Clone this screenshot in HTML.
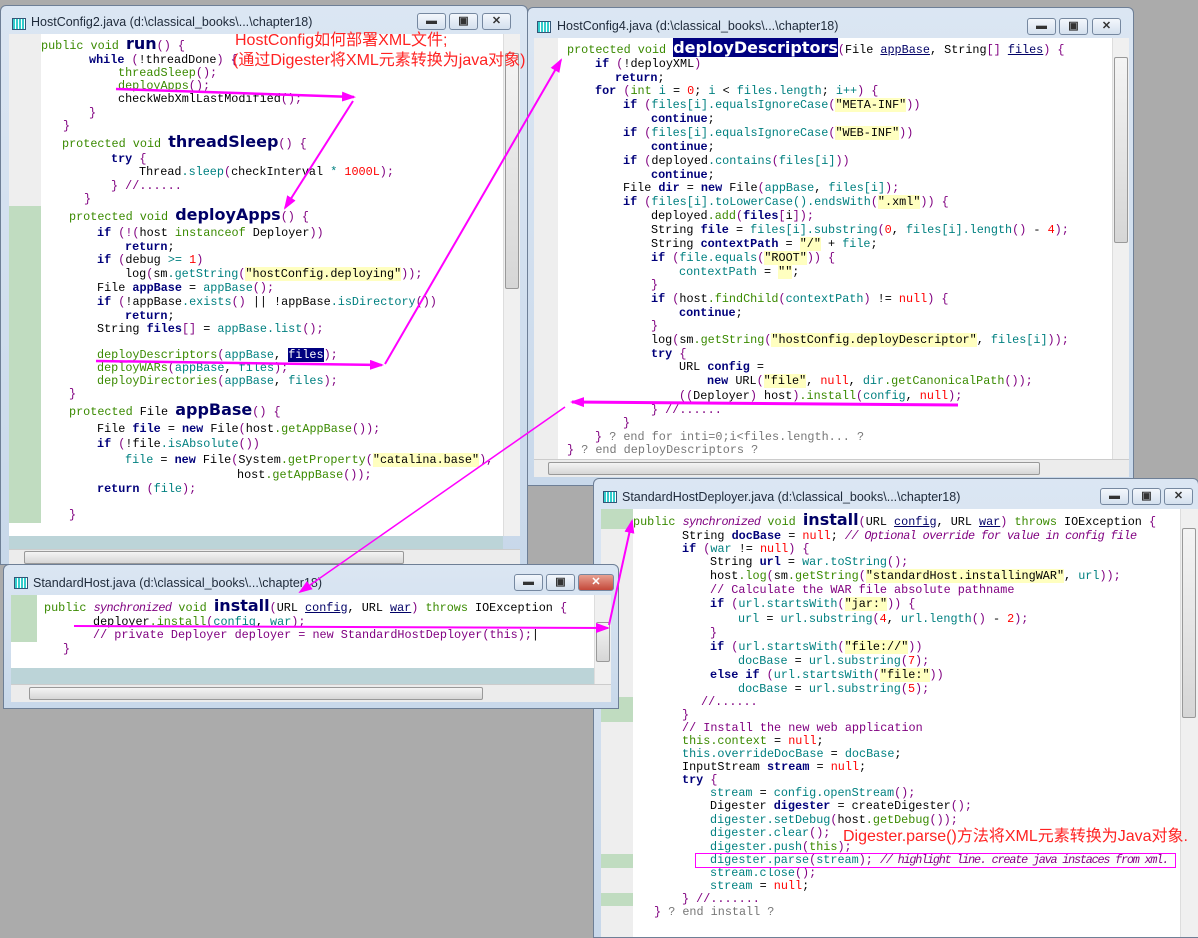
<!DOCTYPE html>
<html><head><meta charset="utf-8"><style>
*{margin:0;padding:0;box-sizing:border-box}
body{width:1198px;height:937px;background:#ababab;position:relative;overflow:hidden;font-family:"Liberation Mono",monospace;font-size:11.8px}
.w{position:absolute;overflow:hidden;background:linear-gradient(#dbe6f3,#c8d8ea);border:1px solid #6e7f96;border-radius:6px 6px 0 0}
.o{position:absolute}
.t{position:absolute;font-family:"Liberation Sans",sans-serif;font-size:12.5px;color:#1e2a3a;white-space:nowrap}
.ic{position:absolute;width:14px;height:12px;border:1px solid #357;background:repeating-linear-gradient(90deg,#3cc 0 2px,#fff 2px 3px)}
.bt{position:absolute;width:29px;height:17px;border:1px solid #7688a0;border-radius:3px;background:linear-gradient(#f3f7fc,#d4e0ee);font:bold 11px "Liberation Sans",sans-serif;color:#333;text-align:center;line-height:15px}
.bt.x{background:linear-gradient(#e8a191,#c4483a);color:#fff;width:44px}
.wh{position:absolute;background:#fff}
.gu{position:absolute;background:#eeeeee}
.gr{position:absolute;background:#c0dcc0}
.vs{position:absolute;background:#f0f0f0;border-left:1px solid #ddd}
.hs{position:absolute;background:#ececec;border-top:1px solid #ccc}
.th{position:absolute;background:linear-gradient(#f4f4f4,#d6d6d6);border:1px solid #999;border-radius:2px}
.bl{position:absolute;background:#bcd4d8}
.l{position:absolute;white-space:pre;line-height:14px;height:14px;color:#000}
.k{color:#00007a;font-weight:bold}
.g{color:#3a8a00}
.m{color:#008080}
.s{background:#ffffc0}
.n{color:#f00}
.c{color:#800080}
.p{color:#800080}
.i{font-style:italic;color:#800080;letter-spacing:-0.6px}
.b{font-family:"DejaVu Sans",sans-serif;font-weight:bold;font-size:16px;color:#000066}
.sel{background:#000080;color:#fff}
.u{text-decoration:underline;color:#000066}
.gy{color:#777}
.red{position:absolute;color:#f22;font-family:"Liberation Sans","Noto Sans CJK SC",sans-serif;font-size:16px;white-space:nowrap;line-height:19px}
</style></head><body>

<!-- Window 1 -->
<div class="w" style="left:0;top:5px;width:528px;height:560px">
<div class="o" style="left:0;top:-5px">
<div class="ic" style="left:11px;top:17px"></div>
<div class="t" style="left:30px;top:14px">HostConfig2.java (d:\classical_books\...\chapter18)</div>
<div class="bt" style="left:416px;top:12px">▬</div><div class="bt" style="left:448px;top:12px">▣</div><div class="bt" style="left:481px;top:12px">✕</div>
<div class="wh" style="left:8px;top:33px;width:498px;height:502px"></div>
<div class="gu" style="left:8px;top:33px;width:32px;height:172px"></div>
<div class="gr" style="left:8px;top:205px;width:32px;height:317px"></div>
<div class="vs" style="left:502px;top:33px;width:17px;height:502px"></div>
<div class="th" style="left:504px;top:52px;width:14px;height:236px"></div>
<div class="bl" style="left:8px;top:535px;width:494px;height:13px"></div>
<div class="hs" style="left:8px;top:548px;width:511px;height:16px"></div>
<div class="th" style="left:23px;top:550px;width:380px;height:13px"></div>

<div class="l" style="left:40px;top:36px"><span class="g">public void </span><span class="b">run</span><span class="p">() {</span></div>
<div class="l" style="left:88px;top:52px"><span class="k">while</span> <span class="p">(</span>!threadDone<span class="p">)</span> <span class="p">{</span></div>
<div class="l" style="left:117px;top:65px"><span class="g">threadSleep</span><span class="p">();</span></div>
<div class="l" style="left:117px;top:78px"><span class="g">deployApps</span><span class="p">();</span></div>
<div class="l" style="left:117px;top:91px">checkWebXmlLastModified<span class="p">();</span></div>
<div class="l" style="left:88px;top:105px"><span class="p">}</span></div>
<div class="l" style="left:62px;top:118px"><span class="p">}</span></div>
<div class="l" style="left:61px;top:134px"><span class="g">protected void </span><span class="b">threadSleep</span><span class="p">() {</span></div>
<div class="l" style="left:110px;top:151px"><span class="k">try</span> <span class="p">{</span></div>
<div class="l" style="left:138px;top:164px">Thread<span class="m">.sleep</span><span class="p">(</span>checkInterval <span class="m">*</span> <span class="n">1000L</span><span class="p">);</span></div>
<div class="l" style="left:110px;top:178px"><span class="p">} //......</span></div>
<div class="l" style="left:83px;top:191px"><span class="p">}</span></div>
<div class="l" style="left:68px;top:207px"><span class="g">protected void </span><span class="b">deployApps</span><span class="p">() {</span></div>
<div class="l" style="left:96px;top:225px"><span class="k">if</span> <span class="p">(!(</span>host <span class="g">instanceof</span> Deployer<span class="p">))</span></div>
<div class="l" style="left:124px;top:239px"><span class="k">return</span>;</div>
<div class="l" style="left:96px;top:252px"><span class="k">if</span> <span class="p">(</span>debug <span class="m">&gt;=</span> <span class="n">1</span><span class="p">)</span></div>
<div class="l" style="left:124px;top:266px">log<span class="p">(</span>sm<span class="m">.getString</span><span class="p">(</span><span class="s">"hostConfig.deploying"</span><span class="p">));</span></div>
<div class="l" style="left:96px;top:280px">File <span class="k">appBase</span> = <span class="m">appBase</span><span class="p">();</span></div>
<div class="l" style="left:96px;top:294px"><span class="k">if</span> <span class="p">(</span>!appBase<span class="m">.exists</span><span class="p">()</span> || !appBase<span class="m">.isDirectory</span><span class="p">())</span></div>
<div class="l" style="left:124px;top:308px"><span class="k">return</span>;</div>
<div class="l" style="left:96px;top:321px">String <span class="k">files</span><span class="p">[]</span> = <span class="m">appBase.list</span><span class="p">();</span></div>
<div class="l" style="left:96px;top:347px"><span class="g">deployDescriptors</span><span class="p">(</span><span class="m">appBase</span>, <span class="sel">files</span><span class="p">);</span></div>
<div class="l" style="left:96px;top:360px"><span class="g">deployWARs</span><span class="p">(</span><span class="m">appBase</span>, <span class="m">files</span><span class="p">);</span></div>
<div class="l" style="left:96px;top:373px"><span class="g">deployDirectories</span><span class="p">(</span><span class="m">appBase</span>, <span class="m">files</span><span class="p">);</span></div>
<div class="l" style="left:68px;top:386px"><span class="p">}</span></div>
<div class="l" style="left:68px;top:402px"><span class="g">protected </span>File <span class="b">appBase</span><span class="p">() {</span></div>
<div class="l" style="left:96px;top:421px">File <span class="k">file</span> = <span class="k">new</span> File<span class="p">(</span>host<span class="g">.getAppBase</span><span class="p">());</span></div>
<div class="l" style="left:96px;top:436px"><span class="k">if</span> <span class="p">(</span>!file<span class="m">.isAbsolute</span><span class="p">())</span></div>
<div class="l" style="left:124px;top:452px"><span class="m">file</span> = <span class="k">new</span> File<span class="p">(</span>System<span class="g">.getProperty</span><span class="p">(</span><span class="s">"catalina.base"</span><span class="p">),</span></div>
<div class="l" style="left:236px;top:467px">host<span class="g">.getAppBase</span><span class="p">());</span></div>
<div class="l" style="left:96px;top:481px"><span class="k">return</span> <span class="p">(</span><span class="m">file</span><span class="p">);</span></div>
<div class="l" style="left:68px;top:507px"><span class="p">}</span></div>
<div class="red" style="left:234px;top:30px">HostConfig如何部署XML文件;</div>
<div class="red" style="left:232px;top:50px">(通过Digester将XML元素转换为java对象)</div>
</div></div>

<!-- Window 2 -->
<div class="w" style="left:527px;top:7px;width:607px;height:479px">
<div class="o" style="left:-527px;top:-7px">
<div class="ic" style="left:536px;top:20px"></div>
<div class="t" style="left:556px;top:18px">HostConfig4.java (d:\classical_books\...\chapter18)</div>
<div class="bt" style="left:1026px;top:17px">▬</div><div class="bt" style="left:1058px;top:17px">▣</div><div class="bt" style="left:1091px;top:17px">✕</div>
<div class="wh" style="left:533px;top:37px;width:582px;height:421px"></div>
<div class="gu" style="left:533px;top:37px;width:24px;height:421px"></div>
<div class="vs" style="left:1111px;top:37px;width:17px;height:421px"></div>
<div class="th" style="left:1113px;top:56px;width:14px;height:186px"></div>
<div class="hs" style="left:533px;top:458px;width:595px;height:18px"></div>
<div class="th" style="left:547px;top:461px;width:492px;height:13px"></div>

<div class="l" style="left:566px;top:40px"><span class="g">protected void </span><span class="b sel" style="color:#fff">deployDescriptors</span><span class="p">(</span>File <span class="u">appBase</span>, String<span class="p">[]</span> <span class="u">files</span><span class="p">) {</span></div>
<div class="l" style="left:594px;top:56px"><span class="k">if</span> <span class="p">(</span>!deployXML<span class="p">)</span></div>
<div class="l" style="left:614px;top:70px"><span class="k">return</span>;</div>
<div class="l" style="left:594px;top:83px"><span class="k">for</span> <span class="p">(</span><span class="g">int</span> <span class="m">i</span> = <span class="n">0</span>; <span class="m">i</span> &lt; <span class="m">files.length</span>; <span class="m">i++</span><span class="p">) {</span></div>
<div class="l" style="left:622px;top:97px"><span class="k">if</span> <span class="p">(</span><span class="m">files[i].equalsIgnoreCase</span><span class="p">(</span><span class="s">"META-INF"</span><span class="p">))</span></div>
<div class="l" style="left:650px;top:111px"><span class="k">continue</span>;</div>
<div class="l" style="left:622px;top:125px"><span class="k">if</span> <span class="p">(</span><span class="m">files[i].equalsIgnoreCase</span><span class="p">(</span><span class="s">"WEB-INF"</span><span class="p">))</span></div>
<div class="l" style="left:650px;top:139px"><span class="k">continue</span>;</div>
<div class="l" style="left:622px;top:153px"><span class="k">if</span> <span class="p">(</span>deployed<span class="m">.contains</span><span class="p">(</span><span class="m">files[i]</span><span class="p">))</span></div>
<div class="l" style="left:650px;top:167px"><span class="k">continue</span>;</div>
<div class="l" style="left:622px;top:180px">File <span class="k">dir</span> = <span class="k">new</span> File<span class="p">(</span><span class="m">appBase</span>, <span class="m">files[i]</span><span class="p">);</span></div>
<div class="l" style="left:622px;top:194px"><span class="k">if</span> <span class="p">(</span><span class="m">files[i].toLowerCase().endsWith</span><span class="p">(</span><span class="s">".xml"</span><span class="p">)) {</span></div>
<div class="l" style="left:650px;top:208px">deployed<span class="g">.add</span><span class="p">(</span><span class="k">files</span><span class="p">[</span>i<span class="p">]);</span></div>
<div class="l" style="left:650px;top:222px">String <span class="k">file</span> = <span class="m">files[i].substring</span><span class="p">(</span><span class="n">0</span>, <span class="m">files[i].length</span><span class="p">()</span> - <span class="n">4</span><span class="p">);</span></div>
<div class="l" style="left:650px;top:236px">String <span class="k">contextPath</span> = <span class="s">"/"</span> + <span class="m">file</span>;</div>
<div class="l" style="left:650px;top:250px"><span class="k">if</span> <span class="p">(</span><span class="m">file.equals</span><span class="p">(</span><span class="s">"ROOT"</span><span class="p">)) {</span></div>
<div class="l" style="left:678px;top:264px"><span class="m">contextPath</span> = <span class="s">""</span>;</div>
<div class="l" style="left:650px;top:277px"><span class="p">}</span></div>
<div class="l" style="left:650px;top:291px"><span class="k">if</span> <span class="p">(</span>host<span class="g">.findChild</span><span class="p">(</span><span class="m">contextPath</span><span class="p">)</span> != <span class="n">null</span><span class="p">) {</span></div>
<div class="l" style="left:678px;top:305px"><span class="k">continue</span>;</div>
<div class="l" style="left:650px;top:318px"><span class="p">}</span></div>
<div class="l" style="left:650px;top:332px">log<span class="p">(</span>sm<span class="g">.getString</span><span class="p">(</span><span class="s">"hostConfig.deployDescriptor"</span>, <span class="m">files[i]</span><span class="p">));</span></div>
<div class="l" style="left:650px;top:346px"><span class="k">try</span> <span class="p">{</span></div>
<div class="l" style="left:678px;top:359px">URL <span class="k">config</span> =</div>
<div class="l" style="left:706px;top:373px"><span class="k">new</span> URL<span class="p">(</span><span class="s">"file"</span>, <span class="n">null</span>, <span class="m">dir</span><span class="g">.getCanonicalPath</span><span class="p">());</span></div>
<div class="l" style="left:678px;top:388px"><span class="p">((</span>Deployer<span class="p">)</span> host<span class="p">)</span><span class="g">.install</span><span class="p">(</span><span class="m">config</span>, <span class="n">null</span><span class="p">);</span></div>
<div class="l" style="left:650px;top:402px"><span class="p">} //......</span></div>
<div class="l" style="left:622px;top:415px"><span class="p">}</span></div>
<div class="l" style="left:594px;top:429px"><span class="p">}</span> <span class="gy">? end for inti=0;i&lt;files.length... ?</span></div>
<div class="l" style="left:566px;top:442px"><span class="p">}</span> <span class="gy">? end deployDescriptors ?</span></div>
</div></div>

<!-- Window 4 -->
<div class="w" style="left:593px;top:478px;width:606px;height:460px">
<div class="o" style="left:-593px;top:-478px">
<div class="ic" style="left:602px;top:490px"></div>
<div class="t" style="left:621px;top:489px">StandardHostDeployer.java (d:\classical_books\...\chapter18)</div>
<div class="bt" style="left:1099px;top:487px">▬</div><div class="bt" style="left:1131px;top:487px">▣</div><div class="bt" style="left:1163px;top:487px">✕</div>
<div class="wh" style="left:600px;top:508px;width:580px;height:429px"></div>
<div class="gu" style="left:600px;top:508px;width:32px;height:429px"></div>
<div class="gr" style="left:600px;top:508px;width:32px;height:20px"></div>
<div class="gr" style="left:600px;top:696px;width:32px;height:25px"></div>
<div class="gr" style="left:600px;top:853px;width:32px;height:14px"></div>
<div class="gr" style="left:600px;top:892px;width:32px;height:13px"></div>
<div class="vs" style="left:1179px;top:508px;width:18px;height:429px"></div>
<div class="th" style="left:1181px;top:527px;width:14px;height:190px"></div>
<div class="l" style="left:632px;top:512px"><span class="g">public </span><span class="i">synchronized</span><span class="g"> void </span><span class="b">install</span><span class="p">(</span>URL <span class="u">config</span>, URL <span class="u">war</span><span class="p">)</span> <span class="g">throws</span> IOException <span class="p">{</span></div>
<div class="l" style="left:681px;top:528px">String <span class="k">docBase</span> = <span class="n">null</span>; <span class="i">// Optional override for value in config file</span></div>
<div class="l" style="left:681px;top:541px"><span class="k">if</span> <span class="p">(</span><span class="m">war</span> != <span class="n">null</span><span class="p">) {</span></div>
<div class="l" style="left:709px;top:554px">String <span class="k">url</span> = <span class="m">war.toString</span><span class="p">();</span></div>
<div class="l" style="left:709px;top:568px">host<span class="g">.log</span><span class="p">(</span>sm<span class="g">.getString</span><span class="p">(</span><span class="s">"standardHost.installingWAR"</span>, <span class="m">url</span><span class="p">));</span></div>
<div class="l" style="left:709px;top:582px"><span class="c">// Calculate the WAR file absolute pathname</span></div>
<div class="l" style="left:709px;top:596px"><span class="k">if</span> <span class="p">(</span><span class="m">url.startsWith</span><span class="p">(</span><span class="s">"jar:"</span><span class="p">)) {</span></div>
<div class="l" style="left:737px;top:611px"><span class="m">url</span> = <span class="m">url.substring</span><span class="p">(</span><span class="n">4</span>, <span class="m">url.length</span><span class="p">()</span> - <span class="n">2</span><span class="p">);</span></div>
<div class="l" style="left:709px;top:625px"><span class="p">}</span></div>
<div class="l" style="left:709px;top:639px"><span class="k">if</span> <span class="p">(</span><span class="m">url.startsWith</span><span class="p">(</span><span class="s">"file://"</span><span class="p">))</span></div>
<div class="l" style="left:737px;top:653px"><span class="m">docBase</span> = <span class="m">url.substring</span><span class="p">(</span><span class="n">7</span><span class="p">);</span></div>
<div class="l" style="left:709px;top:667px"><span class="k">else if</span> <span class="p">(</span><span class="m">url.startsWith</span><span class="p">(</span><span class="s">"file:"</span><span class="p">))</span></div>
<div class="l" style="left:737px;top:681px"><span class="m">docBase</span> = <span class="m">url.substring</span><span class="p">(</span><span class="n">5</span><span class="p">);</span></div>
<div class="l" style="left:700px;top:694px"><span class="p">//......</span></div>
<div class="l" style="left:681px;top:707px"><span class="p">}</span></div>
<div class="l" style="left:681px;top:720px"><span class="c">// Install the new web application</span></div>
<div class="l" style="left:681px;top:733px"><span class="g">this.context</span> = <span class="n">null</span>;</div>
<div class="l" style="left:681px;top:746px"><span class="m">this.overrideDocBase</span> = <span class="m">docBase</span>;</div>
<div class="l" style="left:681px;top:759px">InputStream <span class="k">stream</span> = <span class="n">null</span>;</div>
<div class="l" style="left:681px;top:772px"><span class="k">try</span> <span class="p">{</span></div>
<div class="l" style="left:709px;top:785px"><span class="m">stream</span> = <span class="m">config.openStream</span><span class="p">();</span></div>
<div class="l" style="left:709px;top:798px">Digester <span class="k">digester</span> = createDigester<span class="p">();</span></div>
<div class="l" style="left:709px;top:812px"><span class="m">digester.setDebug</span><span class="p">(</span>host<span class="g">.getDebug</span><span class="p">());</span></div>
<div class="l" style="left:709px;top:825px"><span class="m">digester.clear</span><span class="p">();</span></div>
<div class="l" style="left:709px;top:839px"><span class="m">digester.push</span><span class="p">(</span><span class="g">this</span><span class="p">);</span></div>
<div class="l" style="left:709px;top:852px"><span class="m">digester.parse</span><span class="p">(</span><span class="m">stream</span><span class="p">);</span> <span class="i" style="letter-spacing:-1.2px">// highlight line. create java instaces from xml.</span></div>
<div class="l" style="left:709px;top:865px"><span class="m">stream.close</span><span class="p">();</span></div>
<div class="l" style="left:709px;top:878px"><span class="m">stream</span> = <span class="n">null</span>;</div>
<div class="l" style="left:681px;top:891px"><span class="p">} //.......</span></div>
<div class="l" style="left:653px;top:904px"><span class="p">}</span> <span class="gy">? end install ?</span></div>
<div style="position:absolute;left:694px;top:852px;width:481px;height:15px;border:1px solid #f0f"></div>
<div class="red" style="left:842px;top:826px">Digester.parse()方法将XML元素转换为Java对象.</div>
</div></div>

<!-- Window 3 (on top) -->
<div class="w" style="left:3px;top:564px;width:616px;height:145px">
<div class="o" style="left:-3px;top:-564px">
<div class="ic" style="left:13px;top:576px"></div>
<div class="t" style="left:32px;top:575px">StandardHost.java (d:\classical_books\...\chapter18)</div>
<div class="bt" style="left:513px;top:573px">▬</div><div class="bt" style="left:545px;top:573px">▣</div><div class="bt x" style="left:577px;top:573px;width:36px">✕</div>
<div class="wh" style="left:10px;top:594px;width:592px;height:73px"></div>
<div class="gr" style="left:10px;top:594px;width:26px;height:47px"></div>
<div class="vs" style="left:593px;top:594px;width:17px;height:106px"></div>
<div class="th" style="left:595px;top:621px;width:14px;height:40px"></div>
<div class="bl" style="left:10px;top:667px;width:583px;height:16px"></div>
<div class="hs" style="left:10px;top:683px;width:600px;height:18px"></div>
<div class="th" style="left:28px;top:686px;width:454px;height:13px"></div>
<div class="l" style="left:43px;top:598px"><span class="g">public </span><span class="i">synchronized</span><span class="g"> void </span><span class="b">install</span><span class="p">(</span>URL <span class="u">config</span>, URL <span class="u">war</span><span class="p">)</span> <span class="g">throws</span> IOException <span class="p">{</span></div>
<div class="l" style="left:92px;top:614px">deployer<span class="g">.install</span><span class="p">(</span><span class="m">config</span>, <span class="m">war</span><span class="p">);</span></div>
<div class="l" style="left:92px;top:627px"><span class="c">// private Deployer deployer = new StandardHostDeployer(this);</span>|</div>
<div class="l" style="left:62px;top:641px"><span class="p">}</span></div>
</div></div>

<!-- Arrows -->
<svg style="position:absolute;left:0;top:0" width="1198" height="937">
<defs><marker id="b" markerWidth="14" markerHeight="10" refX="12" refY="5" orient="auto" markerUnits="userSpaceOnUse"><path d="M0,0 L14,5 L0,10 z" fill="#f0f"/></marker></defs>
<g stroke="#f0f" fill="none">
<line x1="116" y1="89" x2="354" y2="97" stroke-width="2.5" marker-end="url(#b)"/>
<line x1="353" y1="101" x2="285" y2="208" stroke-width="2" marker-end="url(#b)"/>
<line x1="96" y1="361" x2="382" y2="365" stroke-width="2.5" marker-end="url(#b)"/>
<line x1="385" y1="364" x2="561" y2="60" stroke-width="2" marker-end="url(#b)"/>
<line x1="958" y1="405" x2="572" y2="402" stroke-width="3" marker-end="url(#b)"/>
<line x1="565" y1="407" x2="300" y2="592" stroke-width="1.5" marker-end="url(#b)"/>
<line x1="74" y1="626" x2="608" y2="628" stroke-width="2" marker-end="url(#b)"/>
<line x1="609" y1="625" x2="632" y2="521" stroke-width="2" marker-end="url(#b)"/>
</g></svg>
</body></html>
